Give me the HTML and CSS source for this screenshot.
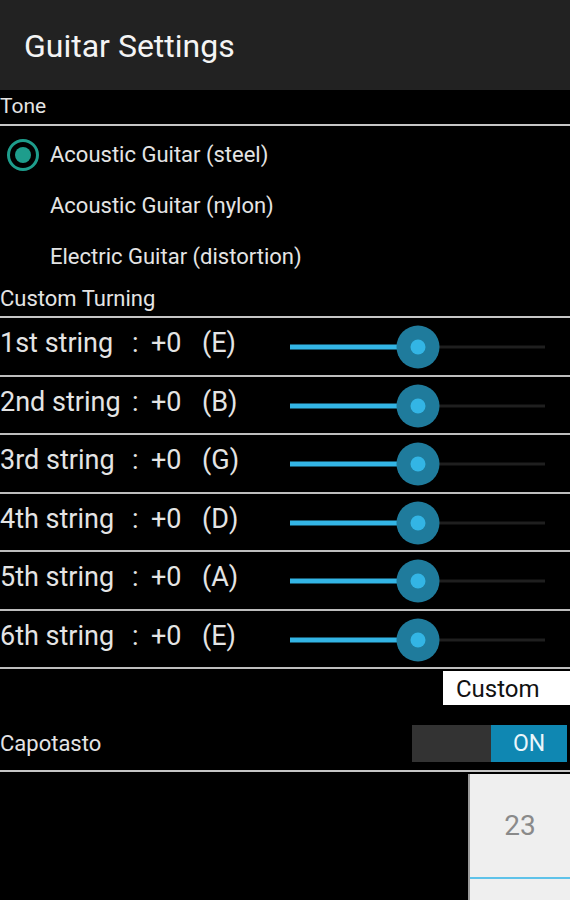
FILE: index.html
```html
<!DOCTYPE html>
<html>
<head>
<meta charset="utf-8">
<link rel="stylesheet" href="styles.css">
</head>
<body>
<div class="app">
  <header class="titlebar"><h1 class="title">Guitar Settings</h1></header>

  <div class="section-head">Tone</div>
  <div class="radios">
    <div class="radio-row">
      <span class="radio on"><span class="dot"></span></span>
      <span class="radio-label">Acoustic Guitar (steel)</span>
    </div>
    <div class="radio-row">
      <span class="radio"></span>
      <span class="radio-label">Acoustic Guitar (nylon)</span>
    </div>
    <div class="radio-row">
      <span class="radio"></span>
      <span class="radio-label">Electric Guitar (distortion)</span>
    </div>
  </div>

  <div class="section-head">Custom Turning</div>
  <div class="strings">
    <div class="string-row">
      <div class="string-label"><span class="skey"><span class="sname">1st string</span><span class="scolon">:</span></span><span class="sval">+0</span><span class="snote">(E)</span></div>
      <svg class="slider" width="260" height="50" viewBox="0 0 260 50"><line x1="150" y1="26" x2="256" y2="26" class="rest"/><line x1="1" y1="26" x2="129" y2="26" class="fill"/><circle cx="129" cy="26" r="21.5" class="halo"/><circle cx="129" cy="26" r="7.5" class="knob"/></svg>
    </div>
    <div class="string-row">
      <div class="string-label"><span class="skey"><span class="sname">2nd string</span><span class="scolon">:</span></span><span class="sval">+0</span><span class="snote">(B)</span></div>
      <svg class="slider" width="260" height="50" viewBox="0 0 260 50"><line x1="150" y1="26" x2="256" y2="26" class="rest"/><line x1="1" y1="26" x2="129" y2="26" class="fill"/><circle cx="129" cy="26" r="21.5" class="halo"/><circle cx="129" cy="26" r="7.5" class="knob"/></svg>
    </div>
    <div class="string-row">
      <div class="string-label"><span class="skey"><span class="sname">3rd string</span><span class="scolon">:</span></span><span class="sval">+0</span><span class="snote">(G)</span></div>
      <svg class="slider" width="260" height="50" viewBox="0 0 260 50"><line x1="150" y1="26" x2="256" y2="26" class="rest"/><line x1="1" y1="26" x2="129" y2="26" class="fill"/><circle cx="129" cy="26" r="21.5" class="halo"/><circle cx="129" cy="26" r="7.5" class="knob"/></svg>
    </div>
    <div class="string-row">
      <div class="string-label"><span class="skey"><span class="sname">4th string</span><span class="scolon">:</span></span><span class="sval">+0</span><span class="snote">(D)</span></div>
      <svg class="slider" width="260" height="50" viewBox="0 0 260 50"><line x1="150" y1="26" x2="256" y2="26" class="rest"/><line x1="1" y1="26" x2="129" y2="26" class="fill"/><circle cx="129" cy="26" r="21.5" class="halo"/><circle cx="129" cy="26" r="7.5" class="knob"/></svg>
    </div>
    <div class="string-row">
      <div class="string-label"><span class="skey"><span class="sname">5th string</span><span class="scolon">:</span></span><span class="sval">+0</span><span class="snote">(A)</span></div>
      <svg class="slider" width="260" height="50" viewBox="0 0 260 50"><line x1="150" y1="26" x2="256" y2="26" class="rest"/><line x1="1" y1="26" x2="129" y2="26" class="fill"/><circle cx="129" cy="26" r="21.5" class="halo"/><circle cx="129" cy="26" r="7.5" class="knob"/></svg>
    </div>
    <div class="string-row">
      <div class="string-label"><span class="skey"><span class="sname">6th string</span><span class="scolon">:</span></span><span class="sval">+0</span><span class="snote">(E)</span></div>
      <svg class="slider" width="260" height="50" viewBox="0 0 260 50"><line x1="150" y1="26" x2="256" y2="26" class="rest"/><line x1="1" y1="26" x2="129" y2="26" class="fill"/><circle cx="129" cy="26" r="21.5" class="halo"/><circle cx="129" cy="26" r="7.5" class="knob"/></svg>
    </div>
  </div>

  <div class="custom-row"><div class="custom-box">Custom</div></div>

  <div class="capo-row">
    <span class="capo-label">Capotasto</span>
    <div class="toggle"><span class="toggle-off"></span><span class="toggle-on">ON</span></div>
  </div>

  <div class="bottom">
    <div class="picker">
      <div class="picker-value">23</div>
      <div class="picker-line"></div>
    </div>
  </div>
</div>
</body>
</html>
```

FILE: styles.css
```css
html, body {
  margin: 0;
  padding: 0;
  background: #000;
}
body {
  width: 570px;
  height: 900px;
  overflow: hidden;
  font-family: Roboto, "Liberation Sans", sans-serif;
  color: #e4e4e4;
}
.app {
  display: flex;
  flex-direction: column;
  height: 900px;
}
.titlebar {
  height: 90px;
  background: #222222;
  display: flex;
  align-items: center;
  padding-left: 24px;
  box-sizing: border-box;
  flex: none;
}
.title {
  margin: 0;
  font-weight: 400;
  font-size: 32px;
  color: #f4f4f4;
  position: relative;
  top: 1px;
}
.section-head {
  flex: none;
  height: 36px;
  box-sizing: border-box;
  border-bottom: 2px solid #c6c6c6;
  font-size: 21px;
  line-height: 32px;
}
.radios {
  flex: none;
  padding-top: 3px;
  display: flex;
  flex-direction: column;
}
.radio-row {
  height: 51px;
  display: flex;
  align-items: center;
}
.radio {
  width: 32px;
  height: 32px;
  margin-left: 7px;
  margin-right: 11px;
  box-sizing: border-box;
  border-radius: 50%;
  display: flex;
  align-items: center;
  justify-content: center;
}
.radio.on {
  border: 3px solid #1e9d8c;
}
.radio .dot {
  width: 16px;
  height: 16px;
  border-radius: 50%;
  background: #1e9d8c;
}
.radio-label {
  font-size: 22px;
}
.radios + .section-head {
  font-size: 22px;
  line-height: 33px;
}
.strings {
  flex: none;
  display: flex;
  flex-direction: column;
}
.string-row {
  height: 58.5px;
  box-sizing: border-box;
  border-bottom: 2px solid #bdbdbd;
  display: flex;
  align-items: center;
}
.string-label {
  width: 289px;
  flex: none;
  font-size: 27px;
  display: flex;
  align-items: baseline;
  position: relative;
  top: -3px;
  white-space: nowrap;
}
.skey {
  width: 151px;
  display: flex;
}
.sname {
  min-width: 132px;
}
.sval {
  width: 51px;
}
.slider {
  display: block;
  flex: none;
}
.slider .rest {
  stroke: #1f1f1f;
  stroke-width: 3;
}
.slider .fill {
  stroke: #33b5e5;
  stroke-width: 5;
}
.slider .halo {
  fill: #1f7b9c;
}
.slider .knob {
  fill: #33b5e5;
}
.custom-row {
  flex: none;
  display: flex;
  justify-content: flex-end;
  padding-top: 2px;
}
.custom-box {
  width: 127px;
  height: 34px;
  box-sizing: border-box;
  background: #fff;
  color: #111;
  font-size: 24px;
  line-height: 36px;
  padding-left: 13px;
}
.capo-row {
  flex: none;
  height: 67px;
  box-sizing: border-box;
  border-bottom: 2px solid #c6c6c6;
  display: flex;
  align-items: center;
  justify-content: space-between;
  padding-bottom: 2px;
  padding-right: 3px;
}
.capo-label {
  font-size: 22px;
  position: relative;
  top: 7px;
}
.toggle {
  display: flex;
  width: 155px;
  height: 37px;
  position: relative;
  top: 7px;
}
.toggle-off {
  width: 79px;
  background: #333333;
}
.toggle-on {
  flex: 1;
  background: #0f87b2;
  color: #eaf6fb;
  font-size: 23px;
  display: flex;
  align-items: center;
  justify-content: center;
}
.bottom {
  flex: 1;
  display: flex;
  justify-content: flex-end;
  padding-top: 2px;
}
.picker {
  width: 102px;
  box-sizing: border-box;
  background: #efefef;
  border-left: 2px solid #9a9a9a;
  display: flex;
  flex-direction: column;
}
.picker-value {
  height: 103px;
  display: flex;
  align-items: center;
  justify-content: center;
  color: #8a8a8a;
  font-size: 28px;
}
.picker-line {
  height: 2px;
  background: #5ec2e9;
}
```
